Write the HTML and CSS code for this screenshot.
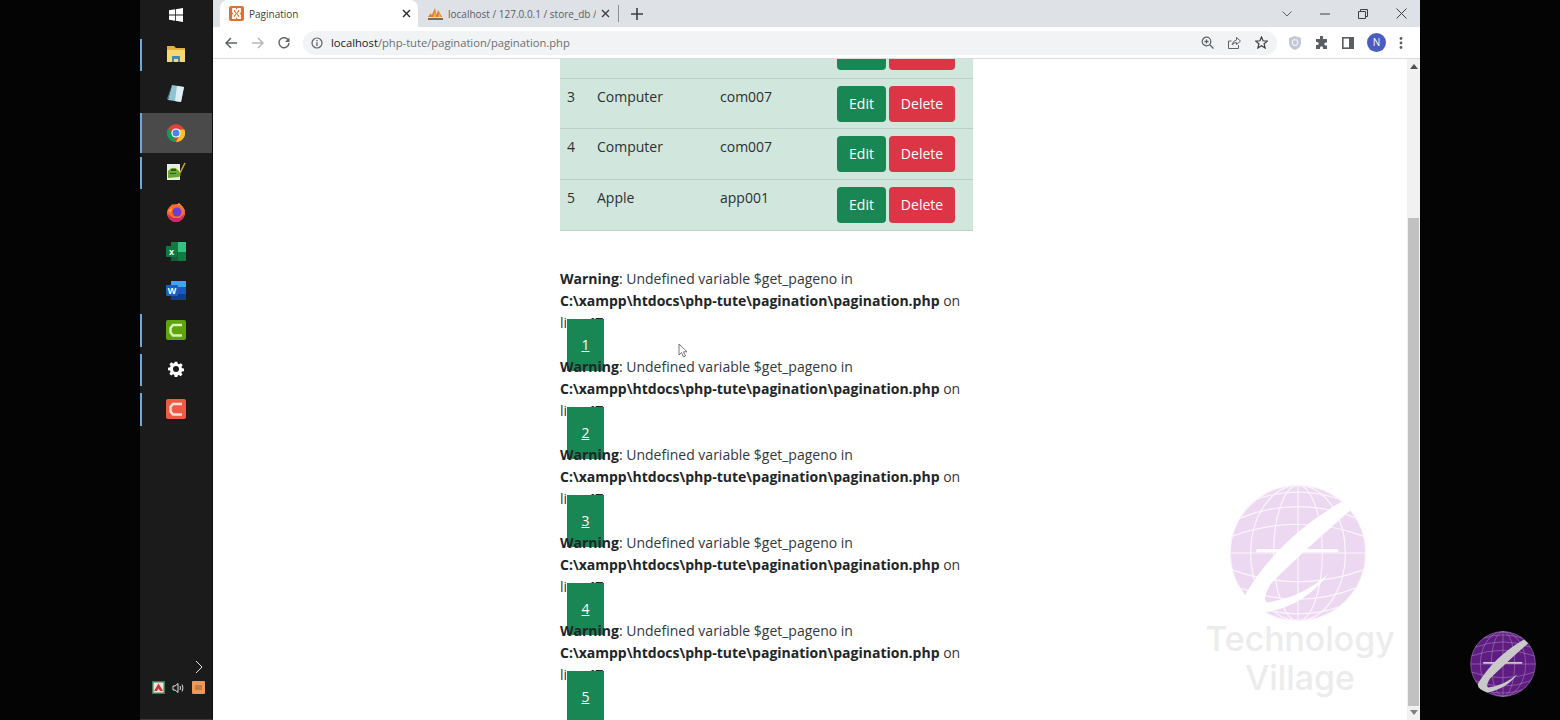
FILE: index.html
```html
<!DOCTYPE html>
<html lang="en">
<head>
<meta charset="utf-8">
<title>Pagination</title>
<link rel="stylesheet" href="styles.css">
</head>
<body>
<svg class="defs" width="0" height="0" aria-hidden="true">
  <symbol id="globe" viewBox="-102 -102 204 204">
    <circle class="g-fill" r="100"/>
    <g class="g-line">
      <ellipse rx="100" ry="100"/><ellipse rx="70" ry="100"/><ellipse rx="36" ry="100"/><path d="M0-100V100"/>
      <path d="M-97-25Q0-60 97-25M-85-52Q0-85 85-52M-60-80Q0-100 60-80M-100 0H100M-97 25Q0 60 97 25M-85 52Q0 85 85 52M-60 80Q0 100 60 80"/>
    </g>
    <rect class="g-swoosh" x="-62" y="-6" width="122" height="5" rx="2.5"/>
    <path class="g-swoosh" d="M65-76Q-25-25-76 58Q-85 76-49 88Q10 78 45 31Q5 66-45 73Q-55 70-40 45C0 5 40-30 78-64Z"/>
  </symbol>
</svg>
<div class="frame">
  <aside class="dock">
    <nav class="dock-list">
      <div class="dock-item start">
        <svg width="14" height="14" viewBox="0 0 14 14"><path fill="#fff" d="M0 2.2 6 1.3V6.6H0ZM6.8 1.2 14 0V6.6H6.8ZM0 7.4H6V12.7L0 11.8ZM6.8 7.4H14V14L6.8 12.8Z"/></svg>
      </div>
      <div class="dock-item open">
        <svg width="20" height="18" viewBox="0 0 20 18"><path fill="#e2b13c" d="M1 1h7l2 2h9v14H1Z"/><path fill="#f8d775" d="M1 5h18v12H1Z"/><path fill="#3d8db5" d="M6 11h8v6h-2v-3H8v3H6Z"/></svg>
      </div>
      <div class="dock-item">
        <svg width="20" height="20" viewBox="0 0 20 20"><path fill="#8fc3d2" d="M6 1 18 3 15 18 2 16Z"/><path fill="#dfeef2" d="M11 2 18 3 15 18 9 17Z"/><path fill="#4f7f8e" d="M6 1 2 16 1 15Z"/></svg>
      </div>
      <div class="dock-item open active">
        <svg width="18" height="18" viewBox="0 0 18 18"><circle cx="9" cy="9" r="9" fill="#db4437"/><path fill="#0f9d58" d="M9 18A9 9 0 0 1 1.2 4.5L5.5 11Z"/><path fill="#fbc02d" d="M9 18A9 9 0 0 0 17.4 5.5H9L12.5 11Z"/><circle cx="9" cy="9" r="4.6" fill="#fff"/><circle cx="9" cy="9" r="3.5" fill="#4285f4"/></svg>
      </div>
      <div class="dock-item open">
        <svg width="20" height="20" viewBox="0 0 20 20"><path fill="#e9efe0" d="M1 2H14V18H1Z"/><path fill="#6aa72f" d="M2 9Q7 3 12 8T13 15L2 16Z"/><path fill="#2f5d1b" d="M5 7h5v2H5ZM4 11h6v1H4Z"/><path stroke="#d6a531" stroke-width="1.6" d="M14 11 19 1"/></svg>
      </div>
      <div class="dock-item">
        <svg width="20" height="20" viewBox="0 0 20 20"><path fill="#ffb02e" d="M5 5 6 2 8 5 13 1 17 5 19 9H5Z"/><circle cx="10" cy="11" r="9" fill="#ff6a2b"/><path fill="#d3246f" d="M2 12A8 8 0 0 0 18 12L14 16H7Z"/><circle cx="11" cy="10" r="4.5" fill="#6b3fd4"/><path fill="#ffb02e" d="M2 9 6 6 5 10Z"/></svg>
      </div>
      <div class="dock-item">
        <svg width="20" height="19" viewBox="0 0 20 19"><rect x="5" width="15" height="19" rx="1" fill="#107c41"/><rect x="12" width="8" height="10" fill="#33c481"/><rect x="5" y="10" width="7" height="9" fill="#185c37"/><rect y="4" width="11" height="11" rx="1" fill="#0e7a42"/><text class="dock-letter" x="5.5" y="12.7">x</text></svg>
      </div>
      <div class="dock-item">
        <svg width="20" height="19" viewBox="0 0 20 19"><rect x="5" width="15" height="19" rx="1" fill="#185abd"/><rect x="5" width="15" height="6" fill="#41a5ee"/><rect x="5" y="13" width="15" height="6" fill="#103f91"/><rect y="4" width="12" height="11" rx="1" fill="#1a5fc4"/><text class="dock-letter" x="6" y="12.7">W</text></svg>
      </div>
      <div class="dock-item open">
        <svg width="20" height="20" viewBox="0 0 20 20"><rect width="20" height="20" rx="2" fill="#5fa30e"/><path fill="none" stroke="#d9f2b4" stroke-width="2.4" d="M16 5H7L4.5 8V12.5L7 15.5H16"/></svg>
      </div>
      <div class="dock-item open">
        <svg width="16" height="16" viewBox="0 0 24 24"><path fill="#fff" fill-rule="evenodd" d="M10 1h4l.6 3.2 2 .8L19.3 3.200 22 6l-1.800 2.700.8 2 3 .6v4l-3.200.6-.8 2L21.800 20 19 22.800l-2.600-1.800-2 .8L14 24h-4l-.6-3.200-2-.8L4.700 21.800 2 19l1.800-2.600-.8-2L0 14v-4l3.200-.6.8-2L2.200 4.700 5 2l2.600 1.800 2-.8ZM12 7.500a4.500 4.500 0 1 0 0 9 4.500 4.500 0 0 0 0-9Z"/></svg>
      </div>
      <div class="dock-item open">
        <svg width="20" height="20" viewBox="0 0 20 20"><rect width="20" height="20" rx="2" fill="#ef5a45"/><path fill="none" stroke="#fde0da" stroke-width="2.4" d="M16 5H7L4.500 8V12.500L7 15.500H16"/></svg>
      </div>
    </nav>
    <div class="tray">
      <svg class="tray-more" width="8" height="14" viewBox="0 0 8 14"><path fill="none" stroke="#e4e4e4" d="M1 1 7 7 1 13"/></svg>
      <div class="tray-icons">
        <svg width="13" height="13" viewBox="0 0 13 13"><rect width="13" height="13" fill="#3c7a58"/><rect x="1.500" y="1.500" width="10" height="10" fill="#f4e2de"/><path fill="#d32f2f" d="M6.500 2.500 11 10H8L6.500 7.500 5 10H2Z"/></svg>
        <svg width="13" height="12" viewBox="0 0 13 12"><path fill="none" stroke="#ddd" d="M1 4H3L6 1.500V10.500L3 8H1ZM8 4Q9 6 8 8M10 2.500Q12 6 10 9.500"/></svg>
        <svg width="13" height="13" viewBox="0 0 13 13"><rect width="13" height="13" rx="1" fill="#e79a5b"/><rect x="3" y="4" width="7" height="5" fill="#c97b3e"/></svg>
      </div>
    </div>
  </aside>

  <div class="browser">
    <header class="tabs">
      <div class="tab current">
        <svg class="favicon" width="15" height="15" viewBox="0 0 15 15"><rect width="15" height="15" rx="2" fill="#e0702c"/><path fill="none" stroke="#fff" stroke-width="1.800" d="M4 3 6 3 7.500 5.500 9 3H11V6L9.500 7.500 11 9V12H9L7.500 9.500 6 12H4V9L5.500 7.500 4 6Z"/></svg>
        <span class="tab-title">Pagination</span>
        <svg class="tab-x" width="9" height="9" viewBox="0 0 9 9"><path stroke="#26292c" stroke-width="1.400" d="M1 1 8 8M8 1 1 8"/></svg>
      </div>
      <div class="tab second">
        <svg class="favicon" width="15" height="13" viewBox="0 0 15 13"><path fill="#e5792a" d="M0 10 3 6 4 10ZM3 10 7 1 9 10ZM8 10 10 3 14 10Z"/><path fill="#f3b33d" d="M5 10 7 4 8 10ZM10 10 11 6 13 10Z"/><path fill="#7a6a5a" d="M0 11h15v2H0Z"/></svg>
        <span class="tab-title fade">localhost / 127.0.0.1 / store_db /</span>
        <svg class="tab-x" width="9" height="9" viewBox="0 0 9 9"><path stroke="#3c4043" stroke-width="1.400" d="M1 1 8 8M8 1 1 8"/></svg>
      </div>
      <span class="tab-sep"></span>
      <svg class="tab-new" width="12" height="12" viewBox="0 0 12 12"><path stroke="#3c4043" stroke-width="1.600" d="M6 0V12M0 6H12"/></svg>
      <div class="win-controls">
        <svg width="10" height="6" viewBox="0 0 10 6"><path fill="none" stroke="#5f6368" d="M.5.500 5 5 9.500.500"/></svg>
        <svg width="10" height="2" viewBox="0 0 10 2"><path stroke="#3c4043" d="M0 1H10"/></svg>
        <svg width="10" height="10" viewBox="0 0 10 10"><path fill="none" stroke="#3c4043" d="M.5 2.500H7.500V9.500H.5ZM2.500 2.500V.5H9.500V7.500H7.500"/></svg>
        <svg width="11" height="11" viewBox="0 0 11 11"><path stroke="#3c4043" d="M.5.500 10.500 10.500M10.500.500 .5 10.500"/></svg>
      </div>
    </header>

    <div class="toolbar">
      <svg class="nav-icon" width="12" height="12" viewBox="0 0 12 12"><path fill="none" stroke="#5f6368" stroke-width="1.500" d="M12 6H1.500M6 1 1 6 6 11"/></svg>
      <svg class="nav-icon" width="12" height="12" viewBox="0 0 12 12"><path fill="none" stroke="#b4b7bb" stroke-width="1.500" d="M0 6H10.500M6 1 11 6 6 11"/></svg>
      <svg class="nav-icon" width="12" height="12" viewBox="0 0 12 12"><path fill="none" stroke="#5f6368" stroke-width="1.400" d="M10.500 3.500A5 5 0 1 0 11 6"/><path fill="#5f6368" d="M11.500 .5V5H7Z"/></svg>
      <div class="omnibox">
        <svg width="12" height="12" viewBox="0 0 12 12"><circle cx="6" cy="6" r="5" fill="none" stroke="#5f6368" stroke-width="1.200"/><path stroke="#5f6368" stroke-width="1.300" d="M6 5.200V9M6 3V4.200"/></svg>
        <span class="url"><span class="url-host">localhost</span>/php-tute/pagination/pagination.php</span>
        <div class="omni-actions">
          <svg width="13" height="13" viewBox="0 0 13 13"><circle cx="5.500" cy="5.500" r="4.300" fill="none" stroke="#5f6368" stroke-width="1.200"/><path stroke="#5f6368" stroke-width="1.300" d="M8.500 8.500 12.500 12.500M3.500 5.500H7.500M5.500 3.500V7.500"/></svg>
          <svg width="13" height="13" viewBox="0 0 13 13"><path fill="none" stroke="#5f6368" d="M3.500 5H.5V12.500H10.500V9M4 9Q5 4.500 8.500 4V1.500L12.500 5 8.500 8.500V6.500Q6 6.500 4 9Z"/></svg>
          <svg width="13" height="13" viewBox="0 0 13 13"><path fill="none" stroke="#3c4043" stroke-width="1.200" d="M6.500 1 8.100 4.800 12.300 5.100 9.100 7.800 10.100 12 6.500 9.700 2.900 12 3.900 7.800 .7 5.100 4.900 4.800Z"/></svg>
        </div>
      </div>
      <div class="ext-icons">
        <svg width="12" height="14" viewBox="0 0 12 14"><path fill="#c3c6d4" d="M6 0 12 2V7Q12 12 6 14 0 12 0 7V2Z"/><circle cx="6" cy="6.500" r="2.800" fill="none" stroke="#eef" stroke-width="1.200"/></svg>
        <svg width="13" height="13" viewBox="0 0 13 13"><path fill="#5a5d61" d="M5 0.500A1.500 1.500 0 0 1 8 2V3H12V6.500H10.800A1.500 1.500 0 0 0 10.800 9.500H12V13H8V11.800A1.500 1.500 0 0 0 5 11.800V13H1V9H2.200A1.500 1.500 0 0 0 2.200 6H1V3H5Z"/></svg>
        <svg width="12" height="12" viewBox="0 0 12 12"><rect x=".8" y=".8" width="10.400" height="10.400" fill="none" stroke="#5a5d61" stroke-width="1.600"/><rect x="7" y="1" width="4" height="10" fill="#5a5d61"/></svg>
        <span class="avatar">N</span>
        <svg width="4" height="12" viewBox="0 0 4 12"><circle cx="2" cy="1.500" r="1.400" fill="#5a5d61"/><circle cx="2" cy="6" r="1.400" fill="#5a5d61"/><circle cx="2" cy="10.500" r="1.400" fill="#5a5d61"/></svg>
      </div>
    </div>

    <div class="viewport">
      <main class="page">
        <div class="sheet">
          <table class="items">
            <colgroup><col class="c-id"><col class="c-name"><col class="c-code"><col class="c-act"></colgroup>
            <tbody>
              <tr><td></td><td></td><td></td><td><a class="btn edit">Edit</a> <a class="btn del">Delete</a></td></tr>
              <tr class="short"><td>3</td><td>Computer</td><td>com007</td><td><a class="btn edit">Edit</a> <a class="btn del">Delete</a></td></tr>
              <tr><td>4</td><td>Computer</td><td>com007</td><td><a class="btn edit">Edit</a> <a class="btn del">Delete</a></td></tr>
              <tr><td>5</td><td>Apple</td><td>app001</td><td><a class="btn edit">Edit</a> <a class="btn del">Delete</a></td></tr>
            </tbody>
          </table>
          <div class="pager">
            <b>Warning</b>: Undefined variable $get_pageno in<br><b>C:\xampp\htdocs\php-tute\pagination\pagination.php</b> on<br>line <b>47</b><br><a class="pg">1</a><br>
            <b>Warning</b>: Undefined variable $get_pageno in<br><b>C:\xampp\htdocs\php-tute\pagination\pagination.php</b> on<br>line <b>47</b><br><a class="pg">2</a><br>
            <b>Warning</b>: Undefined variable $get_pageno in<br><b>C:\xampp\htdocs\php-tute\pagination\pagination.php</b> on<br>line <b>47</b><br><a class="pg">3</a><br>
            <b>Warning</b>: Undefined variable $get_pageno in<br><b>C:\xampp\htdocs\php-tute\pagination\pagination.php</b> on<br>line <b>47</b><br><a class="pg">4</a><br>
            <b>Warning</b>: Undefined variable $get_pageno in<br><b>C:\xampp\htdocs\php-tute\pagination\pagination.php</b> on<br>line <b>47</b><br><a class="pg">5</a><br>
          </div>
        </div>
        <svg class="cursor" width="10" height="15" viewBox="0 0 10 15"><path fill="#fff" stroke="#555" stroke-width=".8" d="M1 1V12L3.500 9.500 5.500 14 7.500 13 5.500 8.800H9Z"/></svg>
        <div class="watermark">
          <svg class="wm-globe" width="138" height="138"><use href="#globe"/></svg>
          <div class="wm-text">Technology<br>Village</div>
        </div>
      </main>
      <div class="scrollbar">
        <span class="sb-up"></span>
        <span class="sb-thumb"></span>
        <span class="sb-down"></span>
      </div>
    </div>
  </div>
</div>
<svg class="corner-logo" width="66" height="66"><use href="#globe"/></svg>
</body>
</html>
```

FILE: styles.css
```css
* { box-sizing: border-box; }
html, body { margin: 0; height: 720px; overflow: hidden; background: #040404; }
body { font-family: "Open Sans", "Noto Sans", sans-serif; position: relative; }
.defs { position: absolute; }

.g-fill { fill: var(--globe-fill); }
.g-line { fill: none; stroke: var(--globe-line); stroke-width: 1.8; }
.g-swoosh { fill: var(--globe-swoosh); }

.frame { display: flex; width: 1280px; height: 720px; margin-left: 140px; }

/* taskbar */
.dock { width: 73px; flex: none; background: #1b1b1b; border-right: 1px solid #0d0d0d; border-bottom: 1px solid #3a3a3a; display: flex; flex-direction: column; padding-bottom: 25px; }
.dock-list { display: flex; flex-direction: column; }
.dock-item { height: 39.4px; display: flex; align-items: center; justify-content: center; position: relative; flex: none; }
.dock-item.start { height: 30px; margin-bottom: 4.6px; }
.dock-item.open::before { content: ""; position: absolute; left: 0; top: 4px; bottom: 3px; width: 2px; background: #6fa8d6; }
.dock-item.active { background: #4a4a4a; }
.dock-item.active::before { top: 0; bottom: 0; }
.dock-letter { font: 700 9px "Liberation Sans", sans-serif; fill: #fff; text-anchor: middle; }
.tray { margin-top: auto; display: flex; flex-direction: column; align-items: flex-end; gap: 7px; }
.tray-more { margin-right: 9px; }
.tray-icons { display: flex; align-items: center; gap: 7px; padding-right: 7px; }

/* browser chrome */
.browser { flex: 1; min-width: 0; display: flex; flex-direction: column; background: #fff; }
.tabs { height: 27px; flex: none; background: #dee1e6; display: flex; align-items: center; padding-left: 7px; }
.tab { height: 27px; width: 198px; flex: none; display: flex; align-items: center; padding: 0 7px 0 9px; gap: 5px; color: #45494e; font: 10px "Open Sans", sans-serif; }
.tab.current { background: #fff; border-radius: 8px 8px 0 0; color: #3c4043; }
.tab.second { width: 199px; padding-left: 10px; }
.tab-title { flex: 1; white-space: nowrap; overflow: hidden; }
.fade { color: #5a5e63; }
.tab-x { flex: none; }
.tab-sep { width: 1px; height: 17px; background: #8b8e92; flex: none; margin-left: 1px; }
.tab-new { margin-left: 12px; flex: none; }
.win-controls { margin-left: auto; display: flex; align-items: center; gap: 28px; padding-right: 13px; }

.toolbar { height: 32px; flex: none; background: #fff; border-bottom: 1px solid #d9dbdf; display: flex; align-items: center; padding-left: 12px; }
.nav-icon { flex: none; margin-right: 14.5px; }
.omnibox { width: 974px; height: 24px; margin-left: -1.5px; border-radius: 12px; background: #f1f3f4; display: flex; align-items: center; padding: 0 9px 0 8px; gap: 8px; flex: none; }
.url { font: 11.2px "Open Sans", sans-serif; color: #6b6f73; white-space: nowrap; }
.url-host { color: #202124; }
.omni-actions { margin-left: auto; display: flex; gap: 14px; align-items: center; }
.ext-icons { display: flex; align-items: center; gap: 14px; margin-left: 12px; }
.avatar { width: 19px; height: 19px; border-radius: 50%; background: #4a5cc0; color: #fff; font: 10px/19px "Open Sans", sans-serif; text-align: center; margin: 0 -1px; }

/* page */
.viewport { flex: 1; min-height: 0; display: flex; }
.page { flex: 1; min-width: 0; position: relative; overflow: hidden; background: #fff; }
.sheet { width: 413px; margin-left: 347px; margin-top: -32px; color: #212529; font-size: 14px; }
.items { width: 413px; border-collapse: collapse; table-layout: fixed; background: #d1e7dd; }
.c-id { width: 30px; } .c-name { width: 123px; } .c-code { width: 117px; } .c-act { width: 143px; }
.items td { padding: 7px; border-bottom: 1px solid #bdd0c7; vertical-align: top; height: 51px; line-height: 22px; color: #2b3035; }
.items tr.short td { height: 50px; }
.items td:last-child { padding-top: 7px; padding-bottom: 0; white-space: nowrap; font-size: 0; }
.btn { display: inline-block; height: 36px; line-height: 35px; border-radius: 4px; color: #fff; text-align: center; font-size: 14px; }
.edit { width: 49px; background: #198754; margin-right: 3px; }
.del { width: 66px; background: #dc3545; }
.pager { margin-top: 37px; line-height: 22px; color: #33383d; }
.pager b { font-weight: 700; color: #212529; }
.pg { padding: 16px 14.5px 17px; margin-left: 7px; background: #198754; color: #fff; text-decoration: underline; }

.cursor { position: absolute; left: 465px; top: 284px; }
.watermark { position: absolute; left: 991px; top: 425px; width: 188px; display: flex; flex-direction: column; align-items: center; }
.wm-globe { --globe-fill: #ecd9f1; --globe-line: #fbf4fc; --globe-swoosh: #fff; flex: none; }
.wm-text { font: 500 33.8px/39px Inter, sans-serif; color: #ececec; text-align: center; white-space: nowrap; margin: -3px 0 0 4px; }

.scrollbar { width: 13px; flex: none; background: #f1f1f1; display: flex; flex-direction: column; align-items: center; }
.sb-up { margin-top: 5px; border: 4px solid transparent; border-top: 0; border-bottom: 5px solid #505050; }
.sb-thumb { margin-top: 149px; width: 11px; height: 488px; background: #c1c1c1; flex: none; }
.sb-down { margin-top: 4px; border: 4px solid transparent; border-bottom: 0; border-top: 5px solid #808080; }

.corner-logo { position: absolute; left: 1470px; top: 631px; --globe-fill: #5f1d82; --globe-line: #a47dbb; --globe-swoosh: #c9c9c9; }
```
